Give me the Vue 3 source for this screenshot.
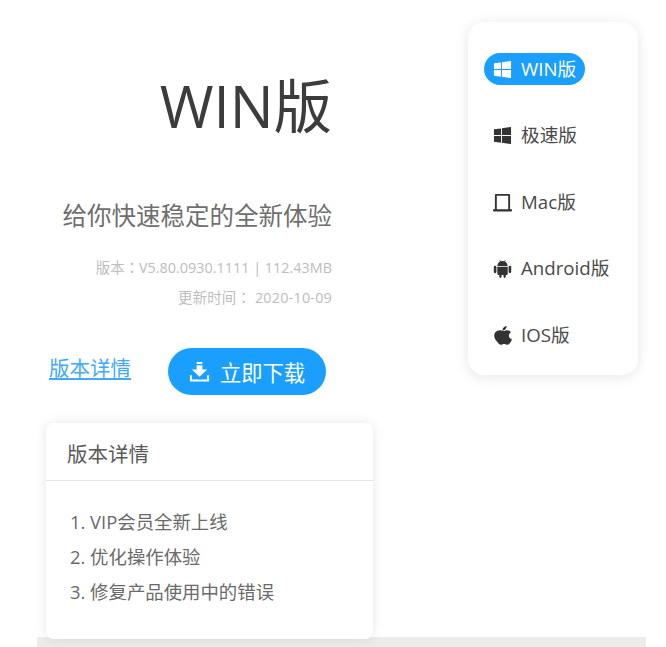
<template>
  <div class="page">
    <div class="main">
      <div class="intro">
        <h1 class="intro__title">WIN版</h1>
        <p class="intro__slogan">给你快速稳定的全新体验</p>
        <p class="intro__meta">版本：V5.80.0930.1111 | 112.43MB</p>
        <p class="intro__meta intro__meta--date">更新时间： 2020-10-09</p>
      </div>
      <div class="actions">
        <a class="actions__link" href="#">版本详情</a>
        <button class="download">
          <svg class="download__icon" viewBox="0 0 22 22" fill="#fff">
            <path d="M8 1h6v2H8z" />
            <path d="M8 4.500h6V9h5l-8 7.500L3 9h5z" />
            <path d="M1 15h2v4.500h16V15h2v6.500H1z" />
          </svg>
          立即下载
        </button>
      </div>
      <div class="details">
        <div class="details__head">版本详情</div>
        <ol class="details__list">
          <li v-for="(item, index) in changes" :key="index">{{ index + 1 }}. {{ item }}</li>
        </ol>
      </div>
    </div>

    <nav class="side">
      <div
        v-for="item in platforms"
        :key="item.name"
        class="side__item"
        :class="{ 'side__item--active': item.active }"
      >
        <svg class="side__icon" viewBox="0 0 20 20" fill="currentColor">
          <path v-for="(d, i) in item.paths" :key="i" :d="d" />
        </svg>
        <span class="side__label">{{ item.name }}</span>
      </div>
    </nav>

    <div class="bar"></div>
  </div>
</template>

<script setup>
const changes = ['VIP会员全新上线', '优化操作体验', '修复产品使用中的错误']

const winPaths = ['M1 3.500l7.500-1v7H1z', 'M9.500 2.300L19 1v8.500H9.500z', 'M1 10.500h7.500v7l-7.500-1z', 'M9.500 10.500H19V19l-9.500-1.300z']

const platforms = [
  { name: 'WIN版', active: true, paths: winPaths },
  { name: '极速版', paths: winPaths },
  {
    name: 'Mac版',
    paths: ['M3 1h14a1 1 0 0 1 1 1v15h2v1.500a1 1 0 0 1-1 1H1a1 1 0 0 1-1-1V17h2V2a1 1 0 0 1 1-1zm1 2v14h12V3z']
  },
  {
    name: 'Android版',
    paths: [
      'M4.500 7.500C4.700 4.800 6.300 3.200 7.500 2.600L6.700 1.300l.5-.3.9 1.400a6 6 0 0 1 3.800 0l.9-1.400.5.3-.8 1.300c1.200.6 2.800 2.200 3 4.900z',
      'M4.500 8.500h11v7.300a1 1 0 0 1-1 1h-1v2a1.200 1.200 0 0 1-2.400 0v-2H9v2a1.200 1.200 0 0 1-2.400 0v-2h-1a1 1 0 0 1-1-1z',
      'M.8 8.500a1.400 1.400 0 0 1 2.800 0v5a1.400 1.400 0 0 1-2.800 0z',
      'M16.400 8.500a1.400 1.400 0 0 1 2.800 0v5a1.400 1.400 0 0 1-2.800 0z'
    ]
  },
  {
    name: 'IOS版',
    paths: [
      'M14.300 0c.1 1.300-.4 2.500-1.200 3.400-.8.900-2 1.500-3.200 1.400-.1-1.200.5-2.400 1.200-3.200C11.900.8 13.200.1 14.300 0z',
      'M20 14.300c-.5 1.100-.7 1.600-1.300 2.500-.8 1.300-2 2.900-3.500 2.900-1.300 0-1.700-.8-3.400-.8s-2.200.8-3.500.8c-1.500 0-2.600-1.400-3.400-2.700C.8 13.400.5 9.100 2.300 6.900c1.200-1.500 3.300-2.400 5.300-2.400 1.500 0 2.500.8 3.700.8 1.200 0 2-.8 3.700-.8 1.300 0 2.900.7 3.900 2-3.300 1.800-2.800 6.500 1.100 7.800z'
    ]
  }
]
</script>

<style scoped>
.page {
  position: relative;
  width: 666px;
  height: 647px;
  overflow: hidden;
  background: #fff;
  font-family: "Open Sans", "Noto Sans CJK SC", sans-serif;
  color: #555;
}

.main {
  width: 327px;
  margin-left: 46px;
  position: relative;
  z-index: 1;
}

.intro {
  width: 286px;
  text-align: right;
  padding-top: 62px;
}

.intro__title {
  margin: 0;
  font-size: 58.300px;
  line-height: 88px;
  font-weight: 400;
  color: #3c3c3c;
}

.intro__slogan {
  margin: 48px 0 0;
  font-size: 24.500px;
  line-height: 36px;
  color: #6f6f6f;
}

.intro__meta {
  margin: 24px 0 0;
  font-family: "Open Sans", "Noto Sans CJK TC", sans-serif;
  font-size: 14.400px;
  line-height: 20px;
  color: #bdbdbd;
}

.intro__meta--date {
  margin-top: 10px;
  letter-spacing: 0.2px;
}

.actions {
  display: flex;
  align-items: flex-start;
  margin: 40px 0 0 3px;
}

.actions__link {
  font-size: 20.500px;
  line-height: 30px;
  margin-top: 5px;
  color: #3fa9ff;
  text-decoration: underline;
}

.download {
  display: flex;
  align-items: center;
  justify-content: center;
  gap: 10px;
  width: 158px;
  height: 47px;
  margin-left: 37px;
  border: none;
  border-radius: 24px;
  background: #1a9fff;
  color: #fff;
  font-family: inherit;
  font-size: 21.300px;
}

.download__icon {
  width: 21px;
  height: 21px;
}

.details {
  margin-top: 28px;
  height: 216px;
  background: #fff;
  border-radius: 8px;
  box-shadow: 0 0 12px rgba(0, 0, 0, 0.1);
}

.details__head {
  height: 57px;
  line-height: 63px;
  padding-left: 21px;
  font-size: 20.500px;
  color: #5a5a5a;
  border-bottom: 1px solid #e6e6e6;
}

.details__list {
  list-style: none;
  margin: 0;
  padding: 23px 0 0 24px;
  font-size: 18.400px;
  line-height: 35px;
  color: #6a6a6a;
}

.side {
  position: absolute;
  left: 468px;
  top: 22px;
  width: 170px;
  height: 353px;
  box-sizing: border-box;
  padding-top: 31px;
  background: #fff;
  border-radius: 16px;
  box-shadow: 0 2px 14px rgba(0, 0, 0, 0.1);
}

.side__item {
  display: flex;
  align-items: center;
  width: fit-content;
  height: 32px;
  margin: 0 0 34.500px 16px;
  padding: 0 9px;
  border-radius: 16px;
  font-size: 18.700px;
  color: #4a4a4a;
}

.side__item--active {
  background: #1a9fff;
  color: #fff;
}

.side__icon {
  width: 19px;
  height: 19px;
  margin-right: 9px;
  color: #333;
  flex-shrink: 0;
}

.side__label {
  margin-bottom: 4px;
}

.side__item--active .side__icon {
  color: #fff;
}

.bar {
  position: absolute;
  left: 37px;
  top: 637px;
  width: 609px;
  height: 10px;
  background: #ececec;
}
</style>

<style>
body {
  margin: 0;
}
</style>
